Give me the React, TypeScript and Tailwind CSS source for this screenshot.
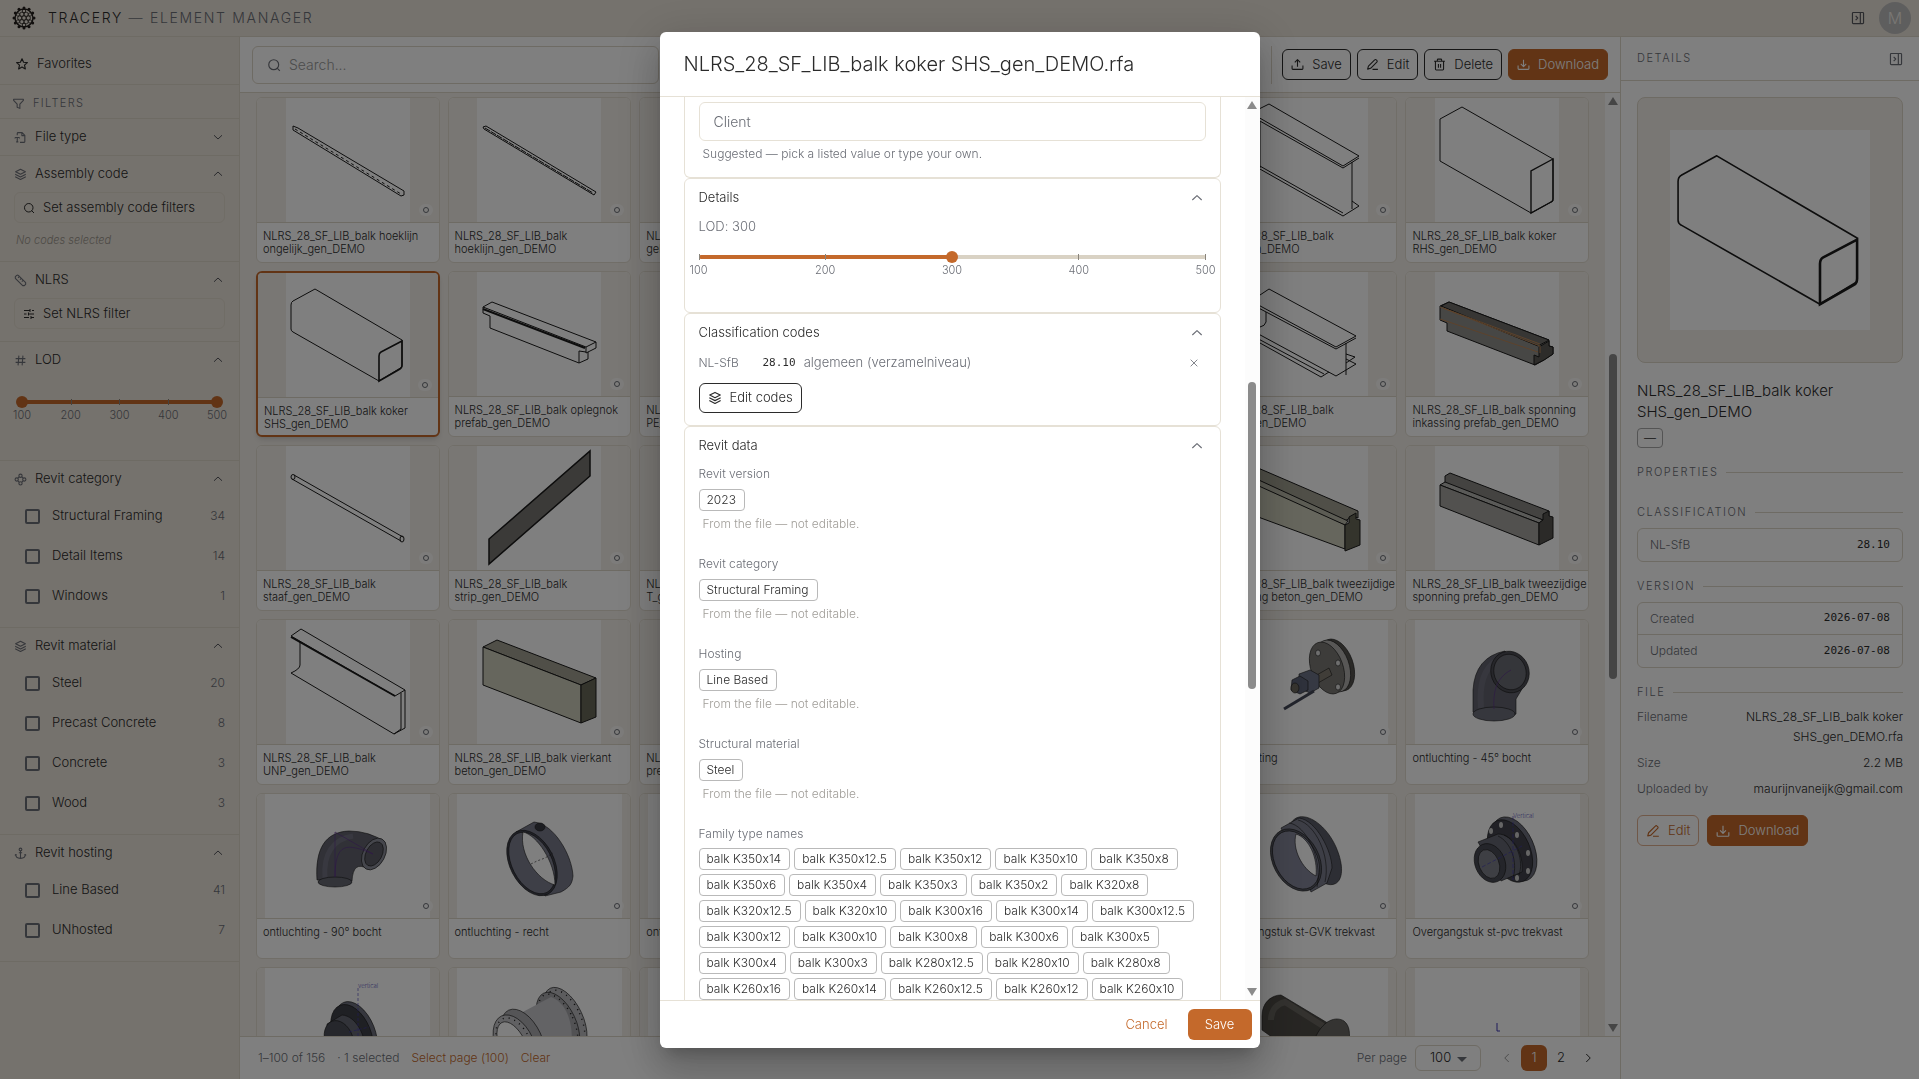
import { useState, type ReactNode } from 'react';

/* ---------- icons ---------- */

const ICONS: Record<string, ReactNode> = {
  star: <path d="M12 3l2.7 6 6.5.6-4.9 4.4 1.4 6.5L12 17.2l-5.7 3.3 1.4-6.5L2.8 9.6 9.3 9z" />,
  filter: <path d="M3 4h18v2.2L14.5 13v8l-5-2.2V13L3 6.2z" />,
  file: <path d="M6 8V4.5A1.5 1.5 0 0 1 7.500 3H15l5 5v11.500a1.500 1.500 0 0 1-1.500 1.500H11M14.500 3v5.500H20M2 12h8M6 12v8M4 20h4M2 12v2M10 12v2" />,
  layers: <path d="M12 2.500l9 4.500-9 4.500L3 7zM4 11.500l-1 .500 9 4.500 9-4.500-1-.500M4 16.300l-1 .500 9 4.500 9-4.500-1-.500" />,
  search: (
    <>
      <circle cx="11.500" cy="11.500" r="8.500" />
      <path d="M17 17l5 5" />
    </>
  ),
  ruler: <path d="M2.500 7a3 3 0 0 1 0-2L5 2.500a3 3 0 0 1 3 0L21.500 16v3L19 21.500h-3L2.500 8zM10 4.500L7.500 7M13.500 8L11 10.500M17 11.500L14.500 14" />,
  sliders: <path d="M2 5h12M18 5h4M14 2v6M2 12h5M11 12h11M11 9v6M2 19h10M16 19h6M16 16v6" />,
  hash: <path d="M9 3L7.500 21M16.500 3L15 21M3 8.500h18M3 15.500h18" />,
  category: (
    <>
      <circle cx="12" cy="5" r="3" />
      <circle cx="12" cy="19" r="3" />
      <circle cx="5" cy="12" r="3" />
      <circle cx="19" cy="12" r="3" />
      <path d="M9.500 7L7 9.500M14.500 7L17 9.500M9.500 17L7 14.500M14.500 17l2.500-2.500" />
    </>
  ),
  anchor: (
    <>
      <circle cx="12" cy="4.500" r="2.500" />
      <path d="M12 7v14M9 10.500h6M3 13.500c0 5 4 7.500 9 7.500s9-2.500 9-7.500M3 13.500l-1 2M3 13.500l2 1.500M21 13.500l1 2M21 13.500l-2 1.500" />
    </>
  ),
  up: <path d="M4 15.500L12 8l8 7.500" />,
  down: <path d="M4 8.500l8 7.500 8-7.500" />,
  left: <path d="M15.500 4l-8 8 8 8" />,
  right: <path d="M8.500 4l8 8-8 8" />,
  close: <path d="M4 4l16 16M20 4L4 20" />,
  upload: <path d="M12 16V3M7 8l5-5 5 5M2 14v5.500A1.500 1.500 0 0 0 3.500 21h17a1.500 1.500 0 0 0 1.500-1.500V14" />,
  download: <path d="M12 3v13M7 11l5 5 5-5M2 14v5.500A1.500 1.500 0 0 0 3.500 21h17a1.500 1.500 0 0 0 1.500-1.500V14" />,
  edit: <path d="M3 20.500l1.500-5.500L16 3.500a2 2 0 0 1 3 0l1 1a2 2 0 0 1 0 3L8.500 19zM12 21h10" />,
  trash: <path d="M2 6h20M8 6V3.500A1.500 1.500 0 0 1 9.500 2h5A1.500 1.500 0 0 1 16 3.500V6M4.500 6v14.500A1.500 1.500 0 0 0 6 22h12a1.500 1.500 0 0 0 1.500-1.500V6M10 11v7M14 11v7" />,
  panel: <path d="M4 2.500h16a1.500 1.500 0 0 1 1.500 1.500v16a1.500 1.500 0 0 1-1.500 1.500H4A1.500 1.500 0 0 1 2.500 20V4A1.500 1.500 0 0 1 4 2.500zM16 2.500v19M8 8.500l3.500 3.500L8 15.500" />,
};

function Icon({ name, className = 'size-3' }: { name: string; className?: string }) {
  return (
    <svg
      viewBox="0 0 24 24"
      fill="none"
      stroke="currentColor"
      strokeWidth="2"
      strokeLinejoin="round"
      className={`shrink-0 ${className}`}
      aria-hidden="true"
    >
      {ICONS[name]}
    </svg>
  );
}

function Logo() {
  const spikes = Array.from({ length: 12 }, (_, i) => (i * Math.PI) / 6);
  const ring = Array.from({ length: 6 }, (_, i) => (i * Math.PI) / 3);
  return (
    <svg viewBox="-12 -12 24 24" className="size-6 text-[#231f1c]" fill="none" stroke="currentColor" strokeWidth=".8" aria-hidden="true">
      <circle r="9" strokeWidth="1.400" />
      {spikes.map((a) => (
        <circle key={a} cx={Math.cos(a) * 10} cy={Math.sin(a) * 10} r="1.500" fill="currentColor" stroke="none" />
      ))}
      <circle r="2.200" />
      {ring.map((a) => (
        <circle key={a} cx={Math.cos(a) * 4.300} cy={Math.sin(a) * 4.300} r="2.100" />
      ))}
      {ring.map((a) => (
        <circle key={a} cx={Math.cos(a + 0.520) * 7} cy={Math.sin(a + 0.520) * 7} r="1.700" />
      ))}
    </svg>
  );
}

/* ---------- thumbnails ---------- */

const square: Record<string, ReactNode> = {
  hoek1: (
    <>
      <path d="M7 28l5 2 106 63v4l-3 1L7 32z" />
      <path d="M9 31l106 65" strokeDasharray="3 3" />
    </>
  ),
  hoek2: (
    <>
      <path d="M6 29l3-1 110 66-2 3L7 31z" />
      <path d="M8 30l108 65" strokeDasharray="6 1" />
    </>
  ),
  koker: (
    <>
      <path d="M29 16L7 28q-2 1-2 4v24q0 2 2 3l86 49 23-14V67z" />
      <path d="M116 68L95 79q-2 1-2 4v25l21-12q2-1 2-4z" strokeWidth="1.600" />
    </>
  ),
  rhs: (
    <>
      <path d="M27 9L5 21v42l91 52 22-12V61z" />
      <path d="M118 61L96 73v42l20-11q2-1 2-3z" strokeWidth="1.400" />
    </>
  ),
  oplegnok: (
    <>
      <path d="M6 35l9-5 104 40v6l-8 4v7l-9 4-89-35V44l-7-3z" />
      <path d="M6 35l103 40 10-5M109 75v6l2-1M102 91V79l7 1" />
      <path d="M6 37l102 39" strokeWidth="2" />
    </>
  ),
  staaf: (
    <>
      <path d="M8 29l109 62M6 33l109 62" />
      <ellipse cx="7" cy="31" rx="2" ry="2.500" />
      <ellipse cx="116" cy="93" rx="2" ry="3" />
    </>
  ),
  strip: <path d="M12 93L113 5v25L12 118z" fill="#777571" strokeWidth="1.500" />,
  unp: (
    <>
      <path d="M5 16l10-7 104 61-10 6z" />
      <path d="M14 21v24q0 4-9 8l103 61 11-6V70M115 73v36l-7 5" />
      <path d="M5 17l104 59" strokeWidth="2" />
    </>
  ),
  ibeam: (
    <>
      <path d="M7 15l18-9 90 52-16 10z" />
      <path d="M7 18l92 52 16-10M16 24v46M108 64v47M7 66l92 52 16-10-7-5M7 63l92 52" />
    </>
  ),
  thq: (
    <>
      <path d="M7 29l18-12 87 47-20 11z" />
      <path d="M7 32l85 45 20-11M22 40v10q-1 4-6 5M102 71v32M7 58l85 46 20-12-10-5M7 66l70 39 8-5M7 63l73 39M102 82l9 3-9 6" />
    </>
  ),
  vierkant: (
    <>
      <path d="M6 27l14-7 99 38-15 7z" fill="#a09f90" />
      <path d="M6 27v38l98 38V65z" fill="#cdcdba" />
      <path d="M104 65l15-7v39l-15 6z" fill="#686858" />
    </>
  ),
  inkassing: (
    <>
      <path d="M5 34l9-4 100 38v6l4 1v7l-9 6-9 5-88-34v-8l-7-3z" fill="#8f8e8b" />
      <path d="M6 34l8-4 100 38-11 6z" fill="#6e6d69" />
      <path d="M99 93V83l5 2V75l10-6v5l4 1v7l-9 6z" fill="#5a5955" />
      <path d="M5 35l100 39v7M8 36l97 36M5 47l98 33" stroke="#b98556" />
    </>
  ),
  beton: (
    <>
      <path d="M6 26l8-4 100 43v7l-5-2-8 5L6 33z" fill="#a09f90" />
      <path d="M6 30l98 45-3 4L6 42z" fill="#b9b8a8" />
      <path d="M6 36l95 43v24L6 68z" fill="#cdcdba" />
      <path d="M101 79l4-2v-6l7-4v6l4 1v25l-15 6z" fill="#686858" />
    </>
  ),
  tweezijdig: (
    <>
      <path d="M10 30l5-3 99 38v5l-6 4L10 38z" fill="#888783" />
      <path d="M10 36l98 38-4 3L5 39z" fill="#b5b4b0" />
      <path d="M5 39v21l99 39V77z" fill="#a4a39f" />
      <path d="M104 77l4-3v-6l6-3v5l4 1v21l-14 7z" fill="#565551" />
    </>
  ),
};

const wide: Record<string, ReactNode> = {
  bocht90: (
    <>
      <path d="M52 86C50 55 60 38 84 37q20 0 36 11l-17 27q-15-9-16 12z" fill="#62636e" />
      <path d="M60 84C58 60 68 45 88 42" stroke="#7b7c8c" strokeWidth="5" opacity=".6" />
      <ellipse cx="70" cy="88" rx="17" ry="5" fill="#666873" />
      <ellipse cx="109" cy="60" rx="11" ry="17" transform="rotate(28 109 60)" fill="#8a8c98" />
      <ellipse cx="109" cy="60" rx="8" ry="13" transform="rotate(28 109 60)" fill="#5c5d66" />
      <path d="M70 83c0-35 12-34 38-23M70 83V38l38 22" stroke="#5d2b91" />
    </>
  ),
  recht: (
    <>
      <path d="M59 38l18-10c20 2 38 33 39 54-1 8-3 11-12 16L88 102z" fill="#787a8b" />
      <ellipse cx="75" cy="69" rx="22" ry="35" transform="rotate(-27 75 69)" fill="#40424e" />
      <ellipse cx="75" cy="69" rx="20" ry="33" transform="rotate(-27 75 69)" fill="#7c7e8e" />
      <path d="M66 38c14 3 32 30 32 53C80 86 62 60 66 38z" fill="#fff" />
      <ellipse cx="83" cy="33" rx="5" ry="4" fill="#393a42" />
      <path d="M74 70l6-3 8-3 8-5" strokeDasharray="2 2" />
    </>
  ),
  bocht45: (
    <>
      <path d="M58 92V70q2-33 32-39l17 38-6 10v15q-20 13-43-2z" fill="#62636e" />
      <path d="M66 88c-2-25 3-39 16-48" stroke="#777886" strokeWidth="6" opacity=".6" />
      <ellipse cx="79" cy="94" rx="21" ry="7" fill="#6c6e7a" />
      <ellipse cx="95" cy="52" rx="19" ry="21" transform="rotate(-20 95 52)" fill="#4c4d55" />
      <ellipse cx="95" cy="52" rx="16" ry="18" transform="rotate(-20 95 52)" fill="#6b6c75" />
      <path d="M79 89c-1-17 2-31 17-39" stroke="#5d2b91" />
    </>
  ),
  kraan: (
    <>
      <ellipse cx="114" cy="45" rx="16" ry="27" transform="rotate(-20 114 45)" fill="#55534f" />
      <ellipse cx="110" cy="46" rx="16" ry="27" transform="rotate(-20 110 46)" fill="#b0afac" />
      <ellipse cx="104" cy="48" rx="16" ry="27" transform="rotate(-20 104 48)" fill="#7b7975" />
      <ellipse cx="95" cy="33" rx="2.500" ry="3" fill="#ddd" />
      <ellipse cx="115" cy="43" rx="2.500" ry="3" fill="#ddd" />
      <ellipse cx="115" cy="67" rx="2.500" ry="3" fill="#ddd" />
      <path d="M92 56l14-8 3 7-14 8z" fill="#807a70" />
      <path d="M76 54l11-4 9 5v13l-9 5-11-5z" fill="#6d7386" />
      <path d="M69 60l8-4 8 5v9l-8 4-9-4z" fill="#5c6276" />
      <ellipse cx="72" cy="68" rx="4" ry="5" fill="#6b675e" />
      <path d="M61 89l30-18" stroke="#444857" strokeWidth="3" />
    </>
  ),
  gvk: (
    <>
      <path d="M67 31c8-18 34-5 46 22 12 28 3 43-12 36z" fill="#5b5d69" />
      <path d="M58 34l18-10c17 2 33 33 33 50l-5 15-16 9z" fill="#7b7d8d" />
      <ellipse cx="73" cy="66" rx="23" ry="33" transform="rotate(-28 73 66)" fill="#595b66" />
      <ellipse cx="73" cy="66" rx="21" ry="31" transform="rotate(-28 73 66)" fill="#85879a" />
      <path d="M73 40c13 4 22 24 20 42C79 75 69 55 73 40z" fill="#fff" />
      <path d="M66 29c17 2 34 36 28 64M75 26c17 4 33 36 27 62" />
    </>
  ),
  pvc: (
    <>
      <ellipse cx="99" cy="55" rx="20" ry="34" transform="rotate(-24 99 55)" fill="#6d6f7c" />
      <ellipse cx="95" cy="57" rx="20" ry="33" transform="rotate(-24 95 57)" fill="#42434c" />
      {[[86, 31], [76, 37], [102, 41], [113, 59], [113, 77], [102, 84]].map(([x, y]) => (
        <ellipse key={`${x}-${y}`} cx={x} cy={y} rx="2" ry="3" fill="#ccc" stroke="none" />
      ))}
      <path d="M63 48l20-8c15 0 26 20 24 38l-21 9z" fill="#646672" />
      <ellipse cx="75" cy="69" rx="15" ry="20" transform="rotate(-22 75 69)" fill="#494b55" />
      <ellipse cx="74" cy="70" rx="10" ry="15" transform="rotate(-22 74 70)" fill="#7c7e88" />
      <path d="M83 42c13 6 20 26 15 42M89 41c13 6 20 26 15 40" />
      <path d="M98 22v65M67 73l40-21" stroke="#3e36b5" strokeDasharray="4 2" />
      <text x="98" y="24" fontSize="6" stroke="none" fill="#6d67c5">Vertical</text>
    </>
  ),
  flens: (
    <>
      <ellipse cx="91" cy="65" rx="19" ry="33" transform="rotate(-22 91 65)" fill="#6d6f7c" />
      <ellipse cx="87" cy="67" rx="19" ry="32" transform="rotate(-22 87 67)" fill="#3f4049" />
      <path d="M62 56l15-9c14 1 24 20 24 40H62z" fill="#646672" />
      <ellipse cx="74" cy="72" rx="14" ry="20" transform="rotate(-20 74 72)" fill="#4c4e58" />
      <path d="M93 20v50M84 64l20-5" stroke="#3e36b5" strokeDasharray="3 2" />
      <text x="93" y="20" fontSize="6" stroke="none" fill="#6d67c5">vertical</text>
    </>
  ),
  koppel: (
    <>
      <ellipse cx="108" cy="52" rx="18" ry="35" transform="rotate(-25 108 52)" fill="#b9b9bd" />
      <ellipse cx="108" cy="52" rx="16" ry="32" transform="rotate(-25 108 52)" strokeWidth="1.500" strokeDasharray="1 5" />
      <ellipse cx="101" cy="56" rx="18" ry="34" transform="rotate(-25 101 56)" fill="#a5a5a9" />
      <ellipse cx="101" cy="56" rx="16" ry="32" transform="rotate(-25 101 56)" strokeWidth="1.500" strokeDasharray="1 5" />
      <path d="M62 46l32-17c17 6 23 30 20 50H70z" fill="#c6c6cb" stroke="none" />
      <ellipse cx="66" cy="73" rx="19" ry="34" transform="rotate(-25 66 73)" fill="#aaaaae" />
      <ellipse cx="58" cy="77" rx="19" ry="32" transform="rotate(-25 58 77)" fill="#c2c2c6" />
      <ellipse cx="58" cy="77" rx="16" ry="29" transform="rotate(-25 58 77)" strokeWidth="1.500" strokeDasharray="1 5" />
      <ellipse cx="56" cy="78" rx="13" ry="26" transform="rotate(-25 56 78)" fill="#fff" />
    </>
  ),
  bout: (
    <>
      <path d="M39 48c0-14 10-21 19-21l50 30v20H60L39 62z" fill="#4f4c47" />
      <path d="M48 52c0-10 6-16 14-18l38 24" stroke="#7a7770" strokeWidth="6" opacity=".6" />
      <path d="M93 68c8-16 20-20 28-15 6 5 6 12 5 24H93z" fill="#6b6964" />
    </>
  ),
  leeg: <path d="M82 55v8h3" stroke="#3e36b5" strokeWidth="1" />,
};

const LIB = 'NLRS_28_SF_LIB_balk';

// seven cards per row
const CARDS: [string, string][] = [
  ['hoek1', `${LIB} hoeklijn\nongelijk_gen_DEMO`],
  ['hoek2', `${LIB}\nhoeklijn_gen_DEMO`],
  ['ibeam', `${LIB}\ngelast_gen_DEMO`],
  ['ibeam', `${LIB}\nHEA_gen_DEMO`],
  ['ibeam', `${LIB}\nHEB_gen_DEMO`],
  ['ibeam', `${LIB}\nIPE_gen_DEMO`],
  ['rhs', `${LIB} koker\nRHS_gen_DEMO`],
  ['koker', `${LIB} koker\nSHS_gen_DEMO`],
  ['oplegnok', `${LIB} oplegnok\nprefab_gen_DEMO`],
  ['ibeam', `${LIB}\nPE_gen_DEMO`],
  ['ibeam', `${LIB}\nraat_gen_DEMO`],
  ['thq', `${LIB}\nSFB_gen_DEMO`],
  ['thq', `${LIB}\nTHQ_gen_DEMO`],
  ['inkassing', `${LIB} sponning\ninkassing prefab_gen_DEMO`],
  ['staaf', `${LIB}\nstaaf_gen_DEMO`],
  ['strip', `${LIB}\nstrip_gen_DEMO`],
  ['ibeam', `${LIB}\nT_gen_DEMO`],
  ['beton', `${LIB}\nbeton_gen_DEMO`],
  ['beton', `${LIB}\nprefab_gen_DEMO`],
  ['beton', `${LIB} tweezijdige\nsponning beton_gen_DEMO`],
  ['tweezijdig', `${LIB} tweezijdige\nsponning prefab_gen_DEMO`],
  ['unp', `${LIB}\nUNP_gen_DEMO`],
  ['vierkant', `${LIB} vierkant\nbeton_gen_DEMO`],
  ['vierkant', `${LIB} vierkant\nprefab_gen_DEMO`],
  ['kraan', 'kogelkraan'],
  ['kraan', 'kogelkraan'],
  ['kraan', 'ontluchting'],
  ['bocht45', 'ontluchting - 45° bocht'],
  ['bocht90', 'ontluchting - 90° bocht'],
  ['recht', 'ontluchting - recht'],
  ['bocht45', 'ontluchting - T-stuk'],
  ['gvk', 'Overgangstuk'],
  ['gvk', 'Overgangstuk st-PE'],
  ['gvk', 'Overgangstuk st-GVK trekvast'],
  ['pvc', 'Overgangstuk st-pvc trekvast'],
  ['flens', 'Overgangstuk vertical'],
  ['koppel', 'Koppelstuk'],
  ['koppel', 'Koppelstuk'],
  ['gvk', 'Passtuk'],
  ['gvk', 'Passtuk'],
  ['bout', 'Bout'],
  ['leeg', 'Symbool'],
];

function Drawing({ name, className }: { name: string; className?: string }) {
  const isSquare = name in square;
  return (
    <svg
      viewBox={isSquare ? '0 0 124 124' : '0 0 165 124'}
      className={`h-full bg-white ${className ?? ''}`}
      fill="none"
      stroke="#1a1a1a"
      strokeWidth={isSquare ? '1' : '.6'}
      aria-hidden="true"
    >
      {isSquare ? square[name] : wide[name]}
    </svg>
  );
}

function Card({ name, label, selected }: { name: string; label: string; selected: boolean }) {
  return (
    <button
      className={`flex h-[166px] flex-col overflow-hidden rounded-md bg-white text-left ${
        selected ? 'border-2 border-[#c4692b] shadow-md' : 'border border-[#e2dcd0]'
      }`}
    >
      <span className="relative flex h-[125px] w-full shrink-0 justify-center border-b border-[#ddd6c8] bg-[#f3efe9]">
        <Drawing name={name} />
        <span className="absolute right-1.5 bottom-1.5 flex h-3 w-3.5 items-center justify-center rounded-full bg-white/60">
          <span className="size-1.5 rounded-full border border-[#6b6e76]" />
        </span>
      </span>
      <span className="px-1.5 pt-[7px] text-[11px] leading-[13px] whitespace-pre text-[#2b2b2b]">{label}</span>
    </button>
  );
}

/* ---------- shared pieces ---------- */

function Scrollbar({ thumb }: { thumb: ReactNode }) {
  return (
    <div className="flex w-[15px] shrink-0 flex-col items-center bg-[#fcfcfc] py-1" aria-hidden="true">
      <svg viewBox="0 0 10 8" className="h-2 w-2.5 shrink-0 fill-[#8b8b8b]"><path d="M5 0l5 8H0z" /></svg>
      <div className="flex w-2 grow flex-col py-1">{thumb}</div>
      <svg viewBox="0 0 10 8" className="h-2 w-2.5 shrink-0 fill-[#8b8b8b]"><path d="M5 8L0 0h10z" /></svg>
    </div>
  );
}

const rangeStyle =
  'pointer-events-none absolute inset-x-0 top-0 h-3 w-full appearance-none bg-transparent [&::-webkit-slider-thumb]:pointer-events-auto [&::-webkit-slider-thumb]:size-3 [&::-webkit-slider-thumb]:appearance-none [&::-webkit-slider-thumb]:rounded-full [&::-webkit-slider-thumb]:bg-[#c4692b]';

function LodSlider({ values, onChange }: { values: number[]; onChange: (v: number[]) => void }) {
  const from = values.length > 1 ? values[0] : 100;
  const to = values[values.length - 1];
  return (
    <div>
      <div className="relative -mx-1.5 h-3">
        <div className="relative mx-1.5 h-3 py-1">
          <div className="h-1 rounded-full bg-[#d9d2c4]">
            <div
              className="h-1 rounded-full bg-[#c4692b]"
              style={{ marginLeft: `${(from - 100) / 4}%`, width: `${(to - from) / 4}%` }}
            />
          </div>
          <div className="absolute inset-x-0 top-[3px] flex justify-between">
            {[100, 200, 300, 400, 500].map((v) => (
              <span key={v} className="h-1.5 w-px bg-[#8a857c]" />
            ))}
          </div>
        </div>
        {values.map((v, i) => (
          <input
            key={i}
            type="range"
            min={100}
            max={500}
            step={100}
            value={v}
            aria-label="LOD"
            className={rangeStyle}
            onChange={(e) => onChange(values.map((old, j) => (j === i ? Number(e.target.value) : old)))}
          />
        ))}
      </div>
      <div className="flex justify-between text-[11px] leading-[14px] text-[#6b6e76]">
        {[100, 200, 300, 400, 500].map((v) => (
          <span key={v} className="flex w-0 justify-center">{v}</span>
        ))}
      </div>
    </div>
  );
}

/* ---------- sidebar ---------- */

function FilterSection({ icon, title, open = true, children }: { icon: string; title: string; open?: boolean; children?: ReactNode }) {
  return (
    <section className="border-b border-[#ddd6c9]">
      <button className="flex h-9 w-full items-center gap-2 pr-[15px] pl-3.5 text-[13px] text-[#2b2b2b]">
        <Icon name={icon} className="size-[13px] text-[#6b6e76]" />
        <span>{title}</span>
        <Icon name={open ? 'up' : 'down'} className="ml-auto size-3 text-[#55565c]" />
      </button>
      {children}
    </section>
  );
}

function Options({ items }: { items: [string, number][] }) {
  return (
    <div className="pb-2.5">
      {items.map(([label, count]) => (
        <label key={label} className="flex h-10 items-center gap-3 pr-3.5 pb-0.5 pl-[25px] text-[13px] text-[#2b2b2b]">
          <input type="checkbox" className="size-[15px] appearance-none rounded-xs border-2 border-[#6b6e76]" />
          {label}
          <span className="ml-auto text-xs text-[#6b6e76]">{count}</span>
        </label>
      ))}
    </div>
  );
}

function Sidebar() {
  const [lod, setLod] = useState([100, 500]);
  return (
    <aside className="w-60 shrink-0 overflow-hidden border-r border-[#ddd6c9] bg-[#ebe4da]">
      <button className="flex h-12 w-full items-center gap-2 border-b border-[#ddd6c9] px-[15px] pt-1.5 text-[13px] text-[#2b2b2b]">
        <Icon name="star" className="size-3.5" />
        Favorites
      </button>
      <h2 className="flex h-[34px] items-center gap-2 border-b border-[#ddd6c9] px-3 pt-1 text-[11px] tracking-[0.12em] text-[#6b6e76]">
        <Icon name="filter" className="size-[13px]" />
        FILTERS
      </h2>
      <FilterSection icon="file" title="File type" open={false} />
      <FilterSection icon="layers" title="Assembly code">
        <div className="px-3.5 pb-3">
          <button className="flex h-[31px] w-full items-center gap-2 rounded-md border border-[#e1dacd] px-2 text-[13px] text-[#2b2b2b]">
            <Icon name="search" />
            Set assembly code filters
          </button>
          <p className="mt-2 pl-0.5 text-[11px] leading-[18px] text-[#9a958c] italic">No codes selected</p>
        </div>
      </FilterSection>
      <FilterSection icon="ruler" title="NLRS">
        <div className="px-3.5 pb-3">
          <button className="flex h-[31px] w-full items-center gap-2 rounded-md border border-[#e1dacd] px-2 text-[13px] text-[#2b2b2b]">
            <Icon name="sliders" />
            Set NLRS filter
          </button>
        </div>
      </FilterSection>
      <FilterSection icon="hash" title="LOD">
        <div className="h-[82px] px-[22px] pt-[18px]">
          <LodSlider values={lod} onChange={setLod} />
        </div>
      </FilterSection>
      <FilterSection icon="category" title="Revit category">
        <Options items={[['Structural Framing', 34], ['Detail Items', 14], ['Windows', 1]]} />
      </FilterSection>
      <FilterSection icon="layers" title="Revit material">
        <Options items={[['Steel', 20], ['Precast Concrete', 8], ['Concrete', 3], ['Wood', 3]]} />
      </FilterSection>
      <FilterSection icon="anchor" title="Revit hosting">
        <Options items={[['Line Based', 41], ['UNhosted', 7]]} />
      </FilterSection>
    </aside>
  );
}

/* ---------- main area ---------- */

const toolButton = 'flex h-[31px] items-center gap-2 rounded-md border px-2 text-[13px]';

function Toolbar() {
  return (
    <div className="flex h-14 shrink-0 items-center border-b border-[#ddd6c8] bg-white px-3">
      <label className="flex h-[38px] w-[407px] items-center gap-2 rounded-md border border-[#ddd6c8] px-3.5 text-[#6b6e76]">
        <Icon name="search" className="size-3.5" />
        <input placeholder="Search..." aria-label="Search" className="w-full text-sm outline-none placeholder:text-[#9a9a9a]" />
      </label>
      <div className="ml-auto flex items-center gap-1.5">
        <span className="mr-1 h-[38px] w-px bg-[#ddd6c8]" />
        <button className={`${toolButton} border-[#2b2b2b] text-[#2b2b2b]`}><Icon name="upload" className="size-[13px]" />Save</button>
        <button className={`${toolButton} border-[#2b2b2b] text-[#2b2b2b]`}><Icon name="edit" className="size-[13px]" />Edit</button>
        <button className={`${toolButton} border-[#2b2b2b] text-[#2b2b2b]`}><Icon name="trash" className="size-[13px]" />Delete</button>
        <button className={`${toolButton} border-[#c4692b] bg-[#c4692b] text-white`}><Icon name="download" className="size-[13px]" />Download</button>
      </div>
    </div>
  );
}

function Pager() {
  return (
    <footer className="flex h-[43px] shrink-0 items-center gap-3 border-t border-[#ddd6c8] bg-white px-[18px] text-xs text-[#6b6e76]">
      <span>1–100 of 156</span>
      <span>· 1 selected</span>
      <button className="text-[#c4692b]">Select page (100)</button>
      <button className="text-[#c4692b]">Clear</button>
      <div className="ml-auto flex items-center">
        <label htmlFor="per-page" className="mr-2">Per page</label>
        <div className="relative mr-4">
          <select id="per-page" className="h-[26px] w-[66px] appearance-none rounded-md border border-[#ddd6c8] pl-3.5 text-[13px] text-[#2b2b2b]">
            <option>100</option>
          </select>
          <svg viewBox="0 0 10 5" className="absolute top-3 right-3.5 h-[5px] w-2.5 fill-[#6b6e76]"><path d="M0 0h10L5 5z" /></svg>
        </div>
        <button aria-label="Previous page" className="w-5 text-[#9a9a9a]"><Icon name="left" className="mx-auto size-3" /></button>
        <button className="mr-px ml-1 size-[26px] rounded-md bg-[#c4692b] text-[13px] text-white">1</button>
        <button className="size-[26px] text-[13px] text-[#2b2b2b]">2</button>
        <button aria-label="Next page" className="w-7 text-[#2b2b2b]"><Icon name="right" className="mx-auto size-3" /></button>
      </div>
    </footer>
  );
}

/* ---------- details panel ---------- */

function PanelHeading({ children }: { children: string }) {
  return (
    <h3 className="flex h-4 items-center gap-2 text-[11px] tracking-[0.14em] text-[#6b6e76] after:h-px after:grow after:bg-[#ddd6c8]">
      {children}
    </h3>
  );
}

const code = "font-['DejaVu_Sans_Mono',monospace] text-[11px] font-normal text-[#2b2b2b]";

function Details() {
  return (
    <aside className="w-[299px] shrink-0 border-l border-[#ddd6c8] bg-white">
      <div className="flex h-11 items-center justify-between border-b border-[#ddd6c8] px-4 text-[11px] tracking-[0.14em] text-[#6b6e76]">
        DETAILS
        <button aria-label="Collapse panel"><Icon name="panel" className="size-3.5" /></button>
      </div>
      <div className="p-4">
        <div className="flex aspect-square items-center justify-center rounded-lg border border-[#ddd6c8] bg-[#f3efe9]">
          <div className="size-[200px]"><Drawing name="koker" className="w-full" /></div>
        </div>
        <h2 className="mt-[17px] text-[15px] leading-[21px] text-[#2b2b2b]">NLRS_28_SF_LIB_balk koker<br />SHS_gen_DEMO</h2>
        <span className="mt-1.5 flex h-5 w-[26px] items-center justify-center rounded-sm border border-[#a8a8a8] text-xs text-[#2b2b2b]">—</span>
        <div className="mt-4"><PanelHeading>PROPERTIES</PanelHeading></div>
        <div className="mt-6"><PanelHeading>CLASSIFICATION</PanelHeading></div>
        <dl className="mt-2 rounded-md border border-[#ddd6c8] text-xs">
          <div className="flex h-8 items-center justify-between px-3">
            <dt className="text-[#6b6e76]">NL-SfB</dt>
            <dd className={code}>28.10</dd>
          </div>
        </dl>
        <div className="mt-4"><PanelHeading>VERSION</PanelHeading></div>
        <dl className="mt-2 divide-y divide-[#ddd6c8] rounded-md border border-[#ddd6c8] text-xs">
          {['Created', 'Updated'].map((k) => (
            <div key={k} className="flex h-8 items-center justify-between px-3">
              <dt className="text-[#6b6e76]">{k}</dt>
              <dd className={code}>2026-07-08</dd>
            </div>
          ))}
        </dl>
        <div className="mt-4"><PanelHeading>FILE</PanelHeading></div>
        <dl className="mt-[7px] flex flex-col gap-1.5 text-xs leading-5 text-[#2b2b2b]">
          <div className="flex justify-between">
            <dt className="text-[#6b6e76]">Filename</dt>
            <dd className="text-right">NLRS_28_SF_LIB_balk koker<br />SHS_gen_DEMO.rfa</dd>
          </div>
          <div className="flex justify-between"><dt className="text-[#6b6e76]">Size</dt><dd>2.2 MB</dd></div>
          <div className="flex justify-between"><dt className="text-[#6b6e76]">Uploaded by</dt><dd>maurijnvaneijk@gmail.com</dd></div>
        </dl>
        <div className="mt-4 flex gap-2">
          <button className={`${toolButton} border-[#e0b090] text-[#c4692b]`}><Icon name="edit" className="size-3.5" />Edit</button>
          <button className={`${toolButton} border-[#c4692b] bg-[#c4692b] text-white`}><Icon name="download" className="size-3.5" />Download</button>
        </div>
      </div>
    </aside>
  );
}

/* ---------- edit dialog ---------- */

const TYPES = [
  'K350x14', 'K350x12.5', 'K350x12', 'K350x10', 'K350x8',
  'K350x6', 'K350x4', 'K350x3', 'K350x2', 'K320x8',
  'K320x12.5', 'K320x10', 'K300x16', 'K300x14', 'K300x12.5',
  'K300x12', 'K300x10', 'K300x8', 'K300x6', 'K300x5',
  'K300x4', 'K300x3', 'K280x12.5', 'K280x10', 'K280x8',
  'K260x16', 'K260x14', 'K260x12.5', 'K260x12', 'K260x10',
];

function Chip({ children }: { children: ReactNode }) {
  return (
    <span className="inline-flex h-[22px] items-center rounded-sm border border-[#b9b9b9] pr-2 pl-[7px] text-xs text-[#2b2b2b]">
      {children}
    </span>
  );
}

function Group({ title, children }: { title: string; children: ReactNode }) {
  return (
    <section className="rounded-md border border-[#e6e1d6] px-3.5">
      <button className="flex h-[37px] w-full items-center justify-between pr-0.5 text-[13px] text-[#2b2b2b]">
        {title}
        <Icon name="up" className="size-3.5 text-[#6b6e76]" />
      </button>
      {children}
    </section>
  );
}

function ReadOnlyField({ label, value }: { label: string; value: string }) {
  return (
    <div className="flex h-[90px] flex-col items-start text-xs text-[#6b6e76]">
      <span className="mb-[7px] leading-4">{label}</span>
      <Chip>{value}</Chip>
      <span className="mt-1 pl-1 leading-[18px] text-[#a09d98]">From the file — not editable.</span>
    </div>
  );
}

function EditDialog() {
  const [lod, setLod] = useState([300]);
  return (
    <div className="fixed inset-0 flex justify-center bg-black/50 px-8 pt-8 pb-[31px]">
      <div role="dialog" aria-labelledby="dialog-title" className="flex w-full max-w-[600px] flex-col overflow-hidden rounded-md bg-white shadow-[0_11px_15px_-7px_rgba(0,0,0,0.2),0_24px_38px_3px_rgba(0,0,0,0.14),0_9px_46px_8px_rgba(0,0,0,0.12)]">
        <h1 id="dialog-title" className="flex h-[65px] shrink-0 items-center border-b border-[#e6e1d6] px-6 text-xl font-light text-[#2b2b2b]">
          NLRS_28_SF_LIB_balk koker SHS_gen_DEMO.rfa
        </h1>
        <div className="flex min-h-0 grow">
          <div className="min-w-0 grow overflow-hidden px-6">
            <section className="h-[81px] rounded-b-md border border-t-0 border-[#e6e1d6] px-3.5 pt-[5px]">
              <input placeholder="Client" aria-label="Client" className="h-[39px] w-full rounded-md border border-[#e6e1d6] px-3.5 text-sm outline-none placeholder:text-[#6b6e76]" />
              <p className="mt-1 pl-1 text-xs leading-[18px] text-[#6b6e76]">Suggested — pick a listed value or type your own.</p>
            </section>
            <Group title="Details">
              <div className="h-24">
                <p className="text-[13px] leading-5 text-[#6b6e76]">LOD: {lod[0]}</p>
                <div className="pt-[15px]"><LodSlider values={lod} onChange={setLod} /></div>
              </div>
            </Group>
            <Group title="Classification codes">
              <div className="flex h-6 items-center text-[13px] text-[#6b6e76]">
                <span className="w-16 text-xs">NL-SfB</span>
                <span className={`mr-2 ${code}`}>28.10</span>
                <span>algemeen (verzamelniveau)</span>
                <button aria-label="Remove code" className="mr-[7px] ml-auto"><Icon name="close" className="size-2.5" /></button>
              </div>
              <button className="mt-2 mb-3 flex h-[30px] items-center gap-2 rounded-md border border-[#2b2b2b] px-2 text-[13px] text-[#2b2b2b]">
                <Icon name="layers" className="size-3.5" />
                Edit codes
              </button>
            </Group>
            <Group title="Revit data">
              <div className="pt-0.5">
                <ReadOnlyField label="Revit version" value="2023" />
                <ReadOnlyField label="Revit category" value="Structural Framing" />
                <ReadOnlyField label="Hosting" value="Line Based" />
                <ReadOnlyField label="Structural material" value="Steel" />
                <p className="mb-1.5 text-xs leading-4 text-[#6b6e76]">Family type names</p>
                <div className="flex flex-wrap gap-1 pb-3">
                  {TYPES.map((t) => (
                    <Chip key={t}>balk {t}</Chip>
                  ))}
                </div>
              </div>
            </Group>
          </div>
          <Scrollbar
            thumb={
              <>
                <span className="grow-[268]" />
                <span className="grow-[307] rounded-full bg-[#8b8b8b]" />
                <span className="grow-[294]" />
              </>
            }
          />
        </div>
        <div className="flex h-12 shrink-0 items-center justify-end gap-3 border-t border-[#e6e1d6] px-2 text-[13px]">
          <button className="px-2 text-[#c4692b]">Cancel</button>
          <button className="h-[31px] w-16 rounded-md bg-[#c4692b] text-white">Save</button>
        </div>
      </div>
    </div>
  );
}

export default function App() {
  return (
    <div className="flex h-screen flex-col overflow-hidden font-['Inter',sans-serif] font-light [font-feature-settings:'calt'_0]">
      <header className="flex h-[37px] shrink-0 items-center border-b border-[#ddd6c9] bg-[#ebe4da] pr-2 pl-3">
        <Logo />
        <h1 className="ml-3 text-sm tracking-[0.12em] text-[#2b2b2b]">
          TRACERY <span className="text-[#6b6e76]">— ELEMENT MANAGER</span>
        </h1>
        <button aria-label="Toggle panel" className="mr-3.5 ml-auto text-[#55565c]"><Icon name="panel" className="size-3.5" /></button>
        <button className="size-8 rounded-full bg-[#bdbdbd] text-base text-[#f3efe9]">M</button>
      </header>

      <div className="flex min-h-0 grow">
        <Sidebar />
        <main className="flex min-w-0 grow flex-col bg-[#f3efe9]">
          <Toolbar />
          <div className="flex min-h-0 grow">
            <div className="grid min-w-0 grow grid-cols-7 content-start gap-2 overflow-hidden px-4 pt-1">
              {CARDS.map(([name, label], i) => (
                <Card key={i} name={name} label={label} selected={name === 'koker'} />
              ))}
            </div>
            <Scrollbar
              thumb={
                <>
                  <span className="grow-[244]" />
                  <span className="grow-[325] rounded-full bg-[#8b8b8b]" />
                  <span className="grow-[340]" />
                </>
              }
            />
          </div>
          <Pager />
        </main>
        <Details />
      </div>

      <EditDialog />
    </div>
  );
}
